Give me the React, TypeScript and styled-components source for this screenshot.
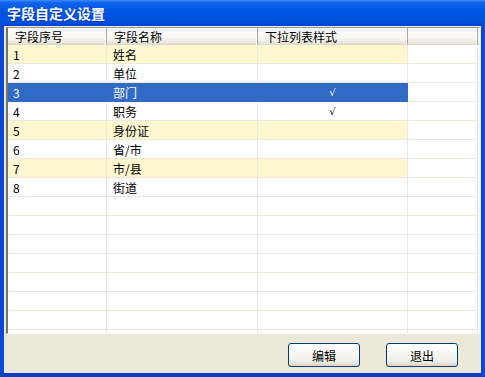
import React from 'react';
import styled, { createGlobalStyle } from 'styled-components';

const GlobalStyle = createGlobalStyle`
  html, body { margin: 0; padding: 0; background: #ffffff; }
  body { font-family: "Noto Sans CJK SC", "DejaVu Sans", sans-serif; }
  * { box-sizing: border-box; }
`;

const Window = styled.div`
  width: 485px;
  height: 377px;
  display: flex;
  flex-direction: column;
  overflow: hidden;
`;

const TitleBar = styled.div`
  height: 26px;
  flex: none;
  display: flex;
  align-items: center;
  padding-left: 7px;
  background: linear-gradient(
    to bottom,
    #3d8ef6 0%,
    #1264ec 10%,
    #0457e6 35%,
    #0054e3 60%,
    #0050dd 85%,
    #0043cc 100%
  );
  color: #ffffff;
  font-size: 14px;
  font-weight: bold;
  text-shadow: 1px 1px 0 rgba(10, 24, 120, 0.45);
`;

const Frame = styled.div`
  flex: 1;
  display: flex;
  flex-direction: column;
  background: #ece9d8;
  border-left: 4px solid #0b48d8;
  border-right: 4px solid #0b48d8;
  border-bottom: 4px solid #0a3fcb;
  padding: 1px 1px 0 2px;
`;

const Grid = styled.div`
  height: 307px;
  flex: none;
  background: #ffffff;
  border-top: 1px solid #9a988e;
  border-left: 2px solid #75736b;
  border-right: 1px solid #f6f5f0;
  border-bottom: 1px solid #fbfaf6;
  overflow: hidden;
`;

const COLS = '99px 151px 150px 70px';

const HeaderRow = styled.div`
  display: grid;
  grid-template-columns: ${COLS};
  height: 17px;
  background: linear-gradient(to bottom, #ffffff 0%, #f7f6f1 55%, #ebe9df 85%, #d8d5c8 100%);
`;

const HeaderCell = styled.div`
  display: flex;
  align-items: center;
  padding-left: 7px;
  font-size: 12px;
  color: #000000;
  border-right: 1px solid #aca899;
  box-shadow: inset -1px 0 0 #ffffff;
  white-space: nowrap;
`;

type Tone = 'plain' | 'yellow' | 'selected';

const Row = styled.div`
  display: grid;
  grid-template-columns: ${COLS};
  height: 19px;
`;

const Cell = styled.div<{ $tone: Tone; $center?: boolean; $pad?: number; $filler?: boolean }>`
  display: flex;
  align-items: center;
  justify-content: ${(p) => (p.$center ? 'center' : 'flex-start')};
  padding-left: ${(p) => (p.$center ? 0 : p.$pad ?? 5)}px;
  font-size: 12px;
  white-space: nowrap;
  border-right: 1px solid ${(p) => (p.$tone === 'selected' && !p.$filler ? '#316ac5' : '#ebe9de')};
  border-bottom: 1px solid ${(p) => (p.$tone === 'selected' && !p.$filler ? '#316ac5' : '#ebe9de')};
  background: ${(p) =>
    p.$filler ? '#ffffff' : p.$tone === 'yellow' ? '#fff7d0' : p.$tone === 'selected' ? '#316ac5' : '#ffffff'};
  color: ${(p) => (p.$tone === 'selected' && !p.$filler ? '#ffffff' : '#000000')};
`;

const Check = styled.span`
  font-family: "DejaVu Sans", sans-serif;
  font-size: 10px;
  line-height: 1;
  padding-top: 2px;
`;

const ButtonBar = styled.div`
  height: 39px;
  flex: none;
  display: flex;
  justify-content: flex-end;
  align-items: flex-start;
  gap: 26px;
  padding: 9px 22px 0 0;
`;

const Button = styled.button`
  width: 72px;
  height: 24px;
  border: 1px solid #003c74;
  border-radius: 3px;
  background: linear-gradient(to bottom, #ffffff 0%, #f8f8f4 40%, #efeee7 80%, #d8d4c8 100%);
  font-family: "Noto Sans CJK SC", "DejaVu Sans", sans-serif;
  font-size: 12px;
  color: #000000;
  padding: 0;
  cursor: pointer;
`;

type Item = { no: string; name: string; check: boolean; tone: Tone };

const items: Item[] = [
  { no: '1', name: '姓名', check: false, tone: 'yellow' },
  { no: '2', name: '单位', check: false, tone: 'plain' },
  { no: '3', name: '部门', check: true, tone: 'selected' },
  { no: '4', name: '职务', check: true, tone: 'plain' },
  { no: '5', name: '身份证', check: false, tone: 'yellow' },
  { no: '6', name: '省/市', check: false, tone: 'plain' },
  { no: '7', name: '市/县', check: false, tone: 'yellow' },
  { no: '8', name: '街道', check: false, tone: 'plain' },
];

const EMPTY_ROWS = 8;

export default function App() {
  return (
    <>
      <GlobalStyle />
      <Window>
        <TitleBar>字段自定义设置</TitleBar>
        <Frame>
          <Grid>
            <HeaderRow>
              <HeaderCell>字段序号</HeaderCell>
              <HeaderCell>字段名称</HeaderCell>
              <HeaderCell>下拉列表样式</HeaderCell>
              <HeaderCell />
            </HeaderRow>
            {items.map((it) => (
              <Row key={it.no}>
                <Cell $tone={it.tone} $pad={5}>{it.no}</Cell>
                <Cell $tone={it.tone} $pad={6}>{it.name}</Cell>
                <Cell $tone={it.tone} $center>
                  {it.check ? <Check>√</Check> : null}
                </Cell>
                <Cell $tone={it.tone} $filler />
              </Row>
            ))}
            {Array.from({ length: EMPTY_ROWS }).map((_, i) => (
              <Row key={`e${i}`}>
                <Cell $tone="plain" />
                <Cell $tone="plain" />
                <Cell $tone="plain" />
                <Cell $tone="plain" $filler />
              </Row>
            ))}
          </Grid>
          <ButtonBar>
            <Button>编辑</Button>
            <Button>退出</Button>
          </ButtonBar>
        </Frame>
      </Window>
    </>
  );
}
